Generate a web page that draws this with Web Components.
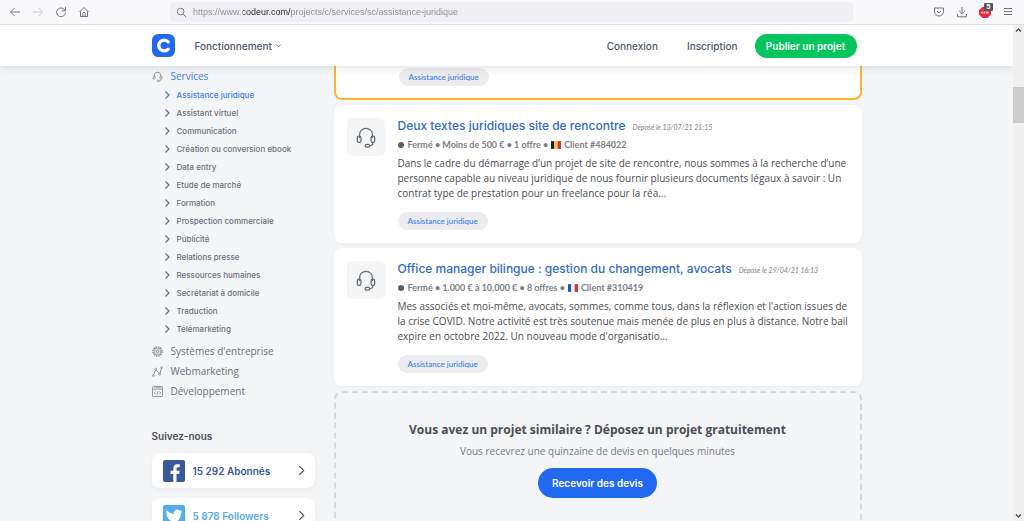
<!DOCTYPE html>
<html lang="fr">
<head>
<meta charset="utf-8">
<title>Assistance juridique - Codeur.com</title>
<style>
html, body { height: 100%; margin: 0; }
body {
  display: flex; flex-direction: column; overflow: hidden;
  font-family: Inter, "Open Sans", sans-serif; font-size: 10px; color: #6a7077;
  background: #f4f5f7;
  --blue: #3b7cf0; --ink: #4a4e52;
}
</style>
</head>
<body>
<browser-bar url="https://www.codeur.com/projects/c/services/sc/assistance-juridique"></browser-bar>
<browser-viewport>
  <site-header></site-header>
  <page-columns>
    <side-nav slot="side"></side-nav>
    <follow-us slot="side">
      <follow-card network="facebook">15 292 Abonnés</follow-card>
      <follow-card network="twitter">5 878 Followers</follow-card>
    </follow-us>
    <featured-card><tag-pill>Assistance juridique</tag-pill></featured-card>
    <project-card date="13/07/21 21:15" budget="Moins de 500 €" offers="1 offre" client="484022" flag="be">
      <span slot="title">Deux textes juridiques site de rencontre</span>
      Dans le cadre du démarrage d’un projet de site de rencontre, nous sommes à la recherche d’une personne capable au niveau juridique de nous fournir plusieurs documents légaux à savoir : Un contrat type de prestation pour un freelance pour la réa...
      <tag-pill slot="tags">Assistance juridique</tag-pill>
    </project-card>
    <project-card date="29/04/21 16:13" budget="1.000 € à 10.000 €" offers="8 offres" client="310419" flag="fr">
      <span slot="title">Office manager bilingue : gestion du changement, avocats</span>
      Mes associés et moi-même, avocats, sommes, comme tous, dans la réflexion et l'action issues de la crise COVID. Notre activité est très soutenue mais menée de plus en plus à distance. Notre bail expire en octobre 2022. Un nouveau mode d'organisatio...
      <tag-pill slot="tags">Assistance juridique</tag-pill>
    </project-card>
    <quote-callout></quote-callout>
  </page-columns>
</browser-viewport>

<script>
const HEADSET = `<path d="M5 13V9.500a7 7 0 0 1 14 0V13"/><rect x="2.500" y="11" width="4" height="7" rx="2"/><rect x="17.500" y="11" width="4" height="7" rx="2"/><path d="M19.500 18c0 2-1.500 3.500-4 3.500"/><rect x="11" y="20" width="5" height="3" rx="1.500"/>`;

function define(name, css, html) {
  const tpl = document.createElement('template');
  customElements.define(name, class extends HTMLElement {
    constructor() { super(); this.attachShadow({ mode: 'open' }); }
    connectedCallback() {
      if (this.shadowRoot.firstChild) return;
      tpl.innerHTML = `<style>*{box-sizing:border-box}a{color:inherit;text-decoration:none}button{font:inherit;border:0;padding:0;background:none;color:inherit;cursor:pointer}svg{display:block;fill:none;stroke:currentColor}${css}</style>` +
        (typeof html === 'function' ? html(this) : html);
      this.shadowRoot.append(tpl.content.cloneNode(true));
    }
  });
}

define('browser-bar', `
  :host { display: flex; align-items: center; flex: none; height: 25px; box-sizing: border-box; padding: 0 10px 0 9px;
    background: #f9f9fb; border-bottom: 1px solid #dddde2; color: #72727c; }
  nav, .tools { display: flex; align-items: center; gap: 11px; }
  button { width: 12px; height: 12px; position: relative; }
  button svg { width: 12px; height: 12px; }
  button:disabled { color: #c8c8cd; }
  label { flex: 1; display: flex; align-items: center; gap: 6px; height: 20px; margin: 0 80px; padding: 0 6px;
    background: #f0f0f4; border-radius: 3px; }
  label svg { width: 11px; height: 11px; flex: none; }
  input { flex: 1; min-width: 0; border: 0; padding: 0; outline: 0; font: 9px/14px "Liberation Sans", Arial, sans-serif;
    color: transparent; -webkit-background-clip: text; background-clip: text;
    background-image: linear-gradient(90deg, #8b8b95 50px, #26262c 50px 98px, #8b8b95 98px); }
  .badge { position: absolute; right: -2px; top: -3px; width: 9px; height: 8px; border-radius: 1px; background: #55555c; color: #fff;
    font: 700 7px/8px "Liberation Sans", Arial, sans-serif; text-align: center; }
`, el => `
  <nav aria-label="Navigateur">
    <button aria-label="Retour"><svg viewBox="0 0 12 12"><path d="M11 6H1.500M5.500 2L1.500 6l4 4"/></svg></button>
    <button aria-label="Suivant" disabled><svg viewBox="0 0 12 12"><path d="M1 6h9.500M6.500 2l4 4-4 4"/></svg></button>
    <button aria-label="Actualiser"><svg viewBox="0 0 12 12"><path d="M10 4.500A4.400 4.400 0 1 0 10.400 6.500M10.500 1v3.800H6.800"/></svg></button>
    <button aria-label="Accueil"><svg viewBox="0 0 12 12"><path d="M1.500 6L6 1.500 10.500 6M2.500 5.200V10.500h7V5.200M4.800 10.500V7.500a1.200 1.200 0 0 1 2.400 0v3"/></svg></button>
  </nav>
  <label aria-label="Adresse"><svg viewBox="0 0 12 12"><circle cx="5" cy="5" r="3.600"/><path d="M7.700 7.700L11 11"/></svg><input value="${el.getAttribute('url')}"></label>
  <div class="tools">
    <button aria-label="Pocket"><svg viewBox="0 0 12 12"><path d="M1.500 2h9v3.500a4.500 4.500 0 0 1-9 0zM4 5l2 2 2-2"/></svg></button>
    <button aria-label="Téléchargements"><svg viewBox="0 0 12 12"><path d="M6 1v6.500M3.200 5L6 7.700 8.800 5M1.500 8v2.800h9V8"/></svg></button>
    <button aria-label="Bloqueur"><svg viewBox="0 0 12 12" style="stroke:none"><path fill="#e8293b" d="M3.500 1h5L12 4v4.500L8.500 12h-5L0 8.500V4z"/><path d="M2 6.500h8" stroke="#fbb8be" stroke-width="2" stroke-dasharray="2 .5"/></svg><span class="badge">5</span></button>
    <button aria-label="Menu"><svg viewBox="0 0 12 12"><path d="M2 2.500h8M2 5.500h8M2 8.500h8"/></svg></button>
  </div>`);

define('browser-viewport', `
  :host { display: flex; flex: 1; min-height: 0; }
  .page { flex: 1; min-width: 0; overflow: hidden; }
  .bar { width: 11px; flex: none; display: flex; flex-direction: column; background: #f0f0f0; color: #505050; }
  .bar svg { width: 11px; height: 11px; flex: none; stroke-width: 1.500; }
  .before { flex: 51; } .thumb { flex: 36; background: #cdcdcd; } .after { flex: 387; }
`, `<div class="page"><slot></slot></div>
  <div class="bar" aria-hidden="true">
    <svg viewBox="0 0 11 11"><path d="M3 6.500L5.500 4 8 6.500"/></svg>
    <div class="before"></div><div class="thumb"></div><div class="after"></div>
    <svg viewBox="0 0 11 11"><path d="M3 4.500L5.500 7 8 4.500"/></svg>
  </div>`);

define('site-header', `
  :host { display: block; position: relative; z-index: 1; background: #fff; box-shadow: 0 2px 8px rgba(40,50,60,.13); }
  header { display: flex; align-items: center; height: 41px; max-width: 710px; margin: 0 auto; padding-right: 5px; color: #4c5a6b; font-weight: 500; }
  .logo svg { width: 23px; height: 23px; }
  .menu { display: flex; align-items: center; gap: 3px; margin: 0 auto 0 20px; }
  .menu svg { width: 7px; height: 7px; }
  nav { display: flex; align-items: center; gap: 29px; }
  .publish { margin-left: 17px; height: 24px; width: 102px; border-radius: 12px; background: #05c65e; color: #fff; font-weight: 600; }
`, `<header>
    <a class="logo" href="#" aria-label="Codeur.com"><svg viewBox="0 0 22 22"><rect width="22" height="22" rx="6" fill="#2069f0" stroke="none"/><path d="M15.500 7.500A5.200 5.200 0 1 0 15.500 14.500" stroke="#fff" stroke-width="3.200" stroke-linecap="round"/></svg></a>
    <button class="menu">Fonctionnement <svg viewBox="0 0 8 8"><path d="M1.500 3L4 5.500 6.500 3"/></svg></button>
    <nav><a href="#">Connexion</a><a href="#">Inscription</a></nav>
    <button class="publish">Publier un projet</button>
  </header>`);

define('page-columns', `
  :host { display: grid; grid-template-columns: 163px minmax(0, 1fr); gap: 19px; max-width: 710px; margin: 0 auto; }
  main { display: flex; flex-direction: column; gap: 5px; }
`, `<aside><slot name="side"></slot></aside><main><slot></slot></main>`);

const SUBS = ['Assistance juridique', 'Assistant virtuel', 'Communication', 'Création ou conversion ebook', 'Data entry', 'Etude de marché', 'Formation', 'Prospection commerciale', 'Publicité', 'Relations presse', 'Ressources humaines', 'Secrétariat à domicile', 'Traduction', 'Télémarketing'];
const CHEVRON = '<svg viewBox="0 0 8 8"><path d="M2.500 .5L6 4 2.500 7.500"/></svg>';
define('side-nav', `
  :host { display: block; }
  ul { list-style: none; margin: 0; padding: 0; }
  a { display: flex; align-items: center; }
  .cat { gap: 8px; height: 20px; font: 500 10px/20px "Open Sans", sans-serif; }
  .cat svg { width: 11px; height: 11px; opacity: .8; }
  .cat.on, .sub.on { color: var(--blue); }
  .cat.on svg { color: #777; }
  .subs { padding: 0 0 3px 11px; }
  .sub { gap: 6px; height: 18px; font-size: 8px; font-weight: 500; }
  .sub svg { width: 8px; height: 8px; stroke-width: 1.200; }
`, `<nav aria-label="Catégories"><ul>
    <li><a class="cat on" href="#"><svg viewBox="0 0 24 24" stroke-width="2">${HEADSET}</svg>Services</a>
      <ul class="subs">${SUBS.map((s, i) => `<li><a class="sub${i ? '' : ' on'}" href="#">${CHEVRON}${s}</a></li>`).join('')}</ul></li>
    <li><a class="cat" href="#"><svg viewBox="0 0 12 12"><rect x="3" y="3" width="6" height="6" rx="1"/><circle cx="6" cy="6" r="1.200"/><circle cx="6" cy="6" r="5" stroke-width="1.600" stroke-dasharray="1.600 1"/></svg>Systèmes d'entreprise</a></li>
    <li><a class="cat" href="#"><svg viewBox="0 0 12 12"><path d="M1.900 9.300L3.800 4.500M4.700 4.300l3 3.800M8.700 7.900L10.200 3"/><circle cx="1.500" cy="10.300" r="1"/><circle cx="4.100" cy="3.400" r="1"/><circle cx="8.300" cy="9" r="1"/><circle cx="10.500" cy="1.800" r="1"/></svg>Webmarketing</a></li>
    <li><a class="cat" href="#"><svg viewBox="0 0 12 12"><rect x=".5" y=".5" width="11" height="11" rx="1"/><path d="M.5 3.500h11M2 2h1M4 2h6M4 6L2.500 7.500 4 9M8 6l1.500 1.500L8 9M6.500 5.700l-1 3.600" stroke-width=".9"/></svg>Développement</a></li>
  </ul></nav>`);

define('follow-us', `
  :host { display: block; margin-top: 27px; }
  h2 { margin: 0 0 9px; font-size: 10px; line-height: 16px; font-weight: 600; color: var(--ink); }
  div { display: flex; flex-direction: column; gap: 10px; }
`, `<h2>Suivez-nous</h2><div><slot></slot></div>`);

const NETWORKS = {
  facebook: ['#3b5898', '<path d="M15.500 22v-8h2.700l.5-3.200h-3.200V8.900c0-1 .4-1.600 1.700-1.600h1.600V4.500c-.5-.1-1.400-.2-2.300-.2-2.600 0-4.200 1.500-4.200 4.200v2.300H9.600V14h2.700v8z" transform="translate(-2 0)"/>'],
  twitter: ['#55acee', '<path d="M19 7.100c-.5.200-1.100.4-1.700.5.600-.4 1.100-.9 1.300-1.600-.6.300-1.200.6-1.900.7a3 3 0 0 0-5.100 2.700A8.500 8.500 0 0 1 5.500 6.300a3 3 0 0 0 .9 4c-.5 0-.9-.2-1.300-.4 0 1.400 1 2.700 2.400 3-.4.100-.9.100-1.300 0 .4 1.200 1.500 2.100 2.800 2.100A6 6 0 0 1 4.600 16.300 8.500 8.500 0 0 0 17.700 8.700c.5-.4 1-1 1.300-1.600z" transform="translate(-2.500 -2) scale(1.150)"/>'],
};
define('follow-card', `
  :host { display: block; }
  a { display: flex; align-items: center; gap: 8px; height: 35px; padding: 0 9px 0 11px; border-radius: 8px; background: #fff;
    box-shadow: 0 2px 5px rgba(40,50,60,.05); font-weight: 600; color: var(--net); }
  .mark { width: 22px; height: 22px; } .go { width: 9px; height: 9px; margin-left: auto; color: #555; }
`, el => {
  const [color, path] = NETWORKS[el.getAttribute('network')];
  return `<a href="#" style="--net:${color}"><svg class="mark" viewBox="0 0 22 22" style="stroke:none"><rect width="22" height="22" rx="2" fill="${color}"/><g fill="#fff">${path}</g></svg><span><slot></slot></span><svg class="go" viewBox="0 0 8 8"><path d="M2 0L6 4 2 8"/></svg></a>`;
});

define('tag-pill', `
  :host { display: block; width: max-content; }
  a { display: block; padding: 0 10px; border-radius: 9px; background: #ebecee; color: var(--blue); font: 500 8px/18px Lato, sans-serif; }
`, `<a href="#"><slot></slot></a>`);

define('featured-card', `
  :host { display: block; box-sizing: border-box; border: 2px solid #fcb336; border-top: 0; border-radius: 0 0 8px 8px; background: #fff; padding: 2px 12px 12px 63px; }
`, `<slot></slot>`);

const FLAGS = { be: ['#222', '#f7c83a', '#e0303c'], fr: ['#2f55a8', '#f4f4f6', '#e0303c'] };
define('project-card', `
  :host { display: block; }
  article { display: flex; gap: 13px; padding: 13px 12px 13px 13px; border-radius: 8px; background: #fff; box-shadow: 0 1px 5px rgba(40,50,60,.04); }
  .icon { width: 38px; height: 38px; flex: none; display: grid; place-items: center; border-radius: 6px; background: #f4f5f7; color: #6c6c6c; }
  .icon svg { width: 22px; height: 22px; }
  .text { flex: 1; min-width: 0; }
  .head { display: flex; align-items: baseline; gap: 7px; height: 16px; line-height: 16px; }
  h3 { margin: 0; font-size: 12px; line-height: 16px; font-weight: 500; color: #346bc6; }
  time { font: italic 7px/16px Lato, sans-serif; color: #7c8288; }
  .meta { display: flex; align-items: center; gap: 3px; margin: 4px 0; font: 700 9px/14px Lato, sans-serif; color: #7b8187; }
  .dot { width: 6px; height: 6px; margin-right: 1px; border-radius: 50%; background: #5b6065; }
  .flag { width: 10px; height: 8px; }
  p { margin: 0 0 11px; font: 10px/15px "Open Sans", sans-serif; color: var(--ink); }
`, el => {
  const g = n => el.getAttribute(n);
  return `<article>
    <div class="icon"><svg viewBox="0 0 24 24" stroke-width="1.400">${HEADSET}</svg></div>
    <div class="text">
      <div class="head"><h3><a href="#"><slot name="title"></slot></a></h3><time>Déposé le ${g('date')}</time></div>
      <div class="meta"><span class="dot"></span><span>Fermé • ${g('budget')} • ${g('offers')} •</span><svg class="flag" viewBox="0 0 9 7" style="stroke:none">${FLAGS[g('flag')].map((c, i) => `<rect x="${i * 3}" width="3" height="7" fill="${c}"/>`).join('')}</svg><span>Client #${g('client')}</span></div>
      <p><slot></slot></p>
      <slot name="tags"></slot>
    </div></article>`;
});

define('quote-callout', `
  :host { display: block; box-sizing: border-box; border: 2px dashed #d6d8da; border-radius: 8px; padding: 28px 12px 36px; text-align: center; }
  h2 { margin: 0 0 4px; font: 700 12px/18px "Open Sans", sans-serif; color: var(--ink); }
  p { margin: 0 0 9px; font: 10px/16px "Open Sans", sans-serif; color: #757b81; }
  button { width: 119px; height: 30px; border-radius: 15px; background: #2069f0; color: #fff; font-weight: 600; }
`, `<h2>Vous avez un projet similaire ? Déposez un projet gratuitement</h2>
  <p>Vous recevrez une quinzaine de devis en quelques minutes</p>
  <button>Recevoir des devis</button>`);
</script>
</body>
</html>
